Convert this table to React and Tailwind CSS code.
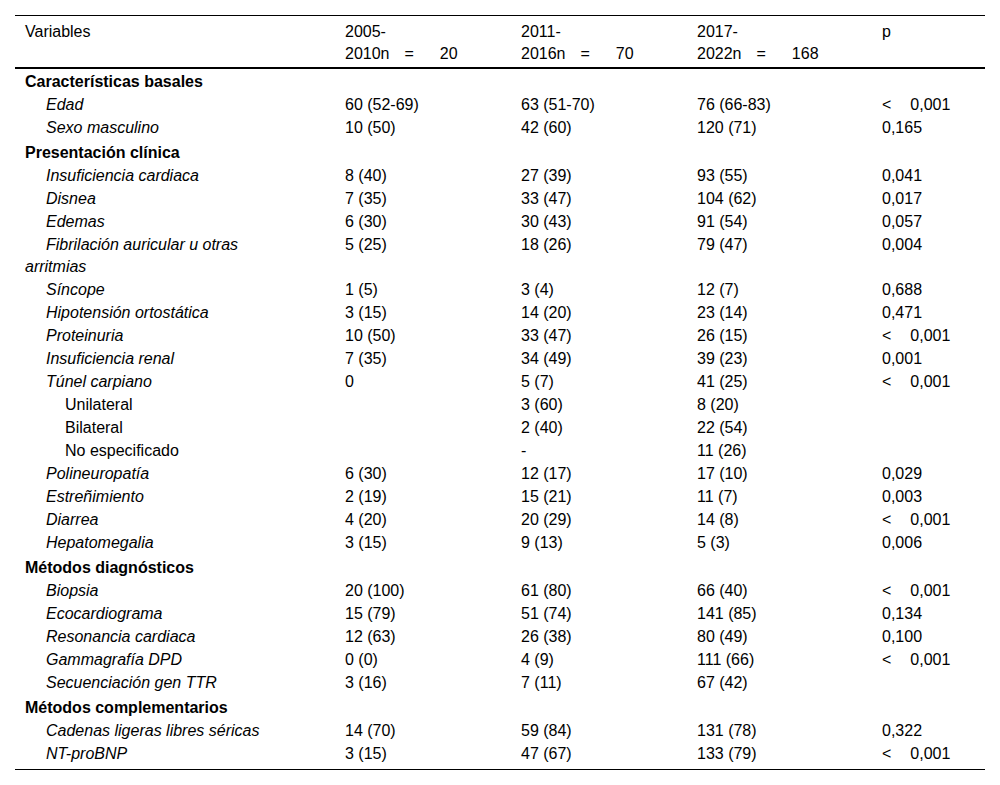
import React from "react";

const rows = [
  { t: "section", label: "Características basales" },
  { label: "Edad", c: ["60 (52-69)", "63 (51-70)", "76 (66-83)", "<0,001"] },
  { label: "Sexo masculino", c: ["10 (50)", "42 (60)", "120 (71)", "0,165"] },
  { t: "section", label: "Presentación clínica" },
  { label: "Insuficiencia cardiaca", c: ["8 (40)", "27 (39)", "93 (55)", "0,041"] },
  { label: "Disnea", c: ["7 (35)", "33 (47)", "104 (62)", "0,017"] },
  { label: "Edemas", c: ["6 (30)", "30 (43)", "91 (54)", "0,057"] },
  { label: "Fibrilación auricular u otras", label2: "arritmias", c: ["5 (25)", "18 (26)", "79 (47)", "0,004"] },
  { label: "Síncope", c: ["1 (5)", "3 (4)", "12 (7)", "0,688"] },
  { label: "Hipotensión ortostática", c: ["3 (15)", "14 (20)", "23 (14)", "0,471"] },
  { label: "Proteinuria", c: ["10 (50)", "33 (47)", "26 (15)", "<0,001"] },
  { label: "Insuficiencia renal", c: ["7 (35)", "34 (49)", "39 (23)", "0,001"] },
  { label: "Túnel carpiano", c: ["0", "5 (7)", "41 (25)", "<0,001"] },
  { t: "sub", label: "Unilateral", c: ["", "3 (60)", "8 (20)", ""] },
  { t: "sub", label: "Bilateral", c: ["", "2 (40)", "22 (54)", ""] },
  { t: "sub", label: "No especificado", c: ["", "-", "11 (26)", ""] },
  { label: "Polineuropatía", c: ["6 (30)", "12 (17)", "17 (10)", "0,029"] },
  { label: "Estreñimiento", c: ["2 (19)", "15 (21)", "11 (7)", "0,003"] },
  { label: "Diarrea", c: ["4 (20)", "20 (29)", "14 (8)", "<0,001"] },
  { label: "Hepatomegalia", c: ["3 (15)", "9 (13)", "5 (3)", "0,006"] },
  { t: "section", label: "Métodos diagnósticos" },
  { label: "Biopsia", c: ["20 (100)", "61 (80)", "66 (40)", "<0,001"] },
  { label: "Ecocardiograma", c: ["15 (79)", "51 (74)", "141 (85)", "0,134"] },
  { label: "Resonancia cardiaca", c: ["12 (63)", "26 (38)", "80 (49)", "0,100"] },
  { label: "Gammagrafía DPD", c: ["0 (0)", "4 (9)", "111 (66)", "<0,001"] },
  { label: "Secuenciación gen TTR", c: ["3 (16)", "7 (11)", "67 (42)", ""] },
  { t: "section", label: "Métodos complementarios" },
  { label: "Cadenas ligeras libres séricas", c: ["14 (70)", "59 (84)", "131 (78)", "0,322"] },
  { label: "NT-proBNP", c: ["3 (15)", "47 (67)", "133 (79)", "<0,001"] },
];

const grid = "grid grid-cols-[320px_176px_176px_185px_113px]";

function PVal({ v }) {
  if (v.startsWith("<")) {
    return (
      <>
        <span>&lt;</span>
        <span className="ml-[19px]">{v.slice(1)}</span>
      </>
    );
  }
  return v;
}

function Period({ a, b, n }) {
  return (
    <div className="pl-[10px]">
      {a}
      <br />
      {b}
      <span className="ml-[15px]">=</span>
      <span className="ml-[26px]">{n}</span>
    </div>
  );
}

export default function App() {
  return (
    <div
      className="bg-white text-black min-h-[785px] px-[15px] pt-[15px] text-[16px] leading-[22px]"
      style={{ fontFamily: '"Liberation Sans", Arial, sans-serif' }}
    >
      <div className="w-[970px] border-t border-black border-b">
        <div className={`${grid} border-b-2 border-black pt-[5px] pb-[2px]`}>
          <div className="pl-[10px]">Variables</div>
          <Period a="2005-" b="2010n" n="20" />
          <Period a="2011-" b="2016n" n="70" />
          <Period a="2017-" b="2022n" n="168" />
          <div className="pl-[10px]">p</div>
        </div>
        <div className="pb-[3px]">
          {rows.map((r, i) => {
            if (r.t === "section") {
              return (
                <div key={i} className="pt-[2px] pb-px pl-[10px] font-bold">
                  {r.label}
                </div>
              );
            }
            return (
              <div key={i} className={`${grid} pb-px`}>
                <div
                  className={
                    r.t === "sub"
                      ? "pl-[50px]"
                      : "pl-[10px] italic indent-[21px]"
                  }
                >
                  {r.label}
                  {r.label2 && (
                    <>
                      <br />
                      {r.label2}
                    </>
                  )}
                </div>
                {r.c.map((v, j) => (
                  <div key={j} className="pl-[10px]">
                    {j === 3 ? <PVal v={v} /> : v}
                  </div>
                ))}
              </div>
            );
          })}
        </div>
      </div>
    </div>
  );
}
